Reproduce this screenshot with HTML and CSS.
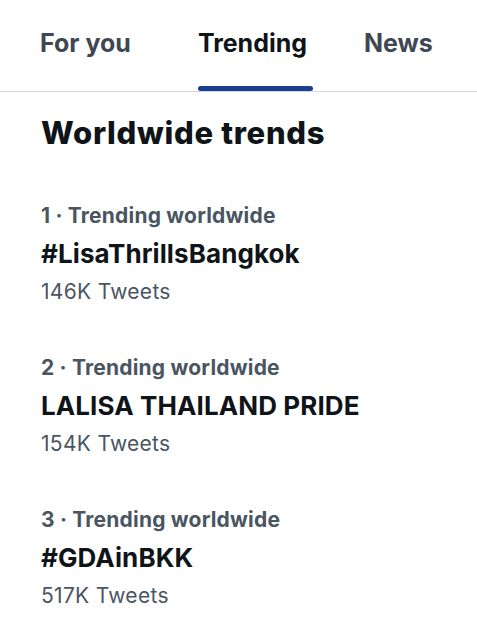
FILE: index.html
```html
<!DOCTYPE html>
<html lang="en">
<head>
    <meta charset="UTF-8">
    <meta name="viewport" content="width=device-width, initial-scale=1.0">
    <title>Trending</title>
    <link rel="stylesheet" href="styles.css">
</head>
<body>
    <nav class="tabs">
        <div class="tab tab-foryou"><span class="tab-label">For you</span></div>
        <div class="tab tab-trending active"><span class="tab-label">Trending</span><div class="tab-bar"></div></div>
        <div class="tab tab-news"><span class="tab-label">News</span></div>
    </nav>

    <main class="content">
        <h1 class="title">Worldwide trends</h1>

        <div class="trend">
            <div class="trend-meta">1 · Trending worldwide</div>
            <div class="trend-name">#LisaThrillsBangkok</div>
            <div class="trend-count">146K Tweets</div>
        </div>

        <div class="trend">
            <div class="trend-meta">2 · Trending worldwide</div>
            <div class="trend-name">LALISA THAILAND PRIDE</div>
            <div class="trend-count">154K Tweets</div>
        </div>

        <div class="trend">
            <div class="trend-meta">3 · Trending worldwide</div>
            <div class="trend-name">#GDAinBKK</div>
            <div class="trend-count">517K Tweets</div>
        </div>
    </main>
</body>
</html>
```

FILE: styles.css
```css
* {
    margin: 0;
    padding: 0;
    box-sizing: border-box;
}
body {
    font-family: Inter, "Noto Sans", sans-serif;
    background: #fff;
    color: #0f1419;
    width: 477px;
    height: 640px;
    overflow: hidden;
}
.tabs {
    display: flex;
    height: 92px;
    border-bottom: 1px solid #cfd9de;
    padding-left: 40px;
}
.tab {
    display: flex;
    flex-direction: column;
    align-items: flex-start;
    justify-content: space-between;
    padding-top: 28px;
    font-size: 25px;
    font-weight: 700;
    color: #3e4753;
}
.tab-foryou {
    margin-right: 67px;
}
.tab-news {
    margin-left: 51px;
}
.tab.active {
    color: #0f1419;
}
.tab-bar {
    width: 115px;
    height: 5px;
    border-radius: 3px;
    background: #1b3f8f;
}
.content {
    padding-left: 41px;
}
.title {
    font-size: 31px;
    font-weight: 800;
    line-height: 40px;
    margin-top: 21px;
    margin-bottom: 44px;
    letter-spacing: 0.7px;
}
.trend {
    margin-bottom: 38px;
}
.trend-meta {
    font-size: 21px;
    font-weight: 700;
    color: #4a5562;
    line-height: 38px;
    letter-spacing: 0.2px;
}
.trend-name {
    font-size: 26px;
    font-weight: 700;
    color: #0f1419;
    line-height: 38px;
    letter-spacing: 0.1px;
}
.trend-count {
    font-size: 21px;
    font-weight: 400;
    color: #4a5562;
    line-height: 38px;
    letter-spacing: 0.3px;
}
```
